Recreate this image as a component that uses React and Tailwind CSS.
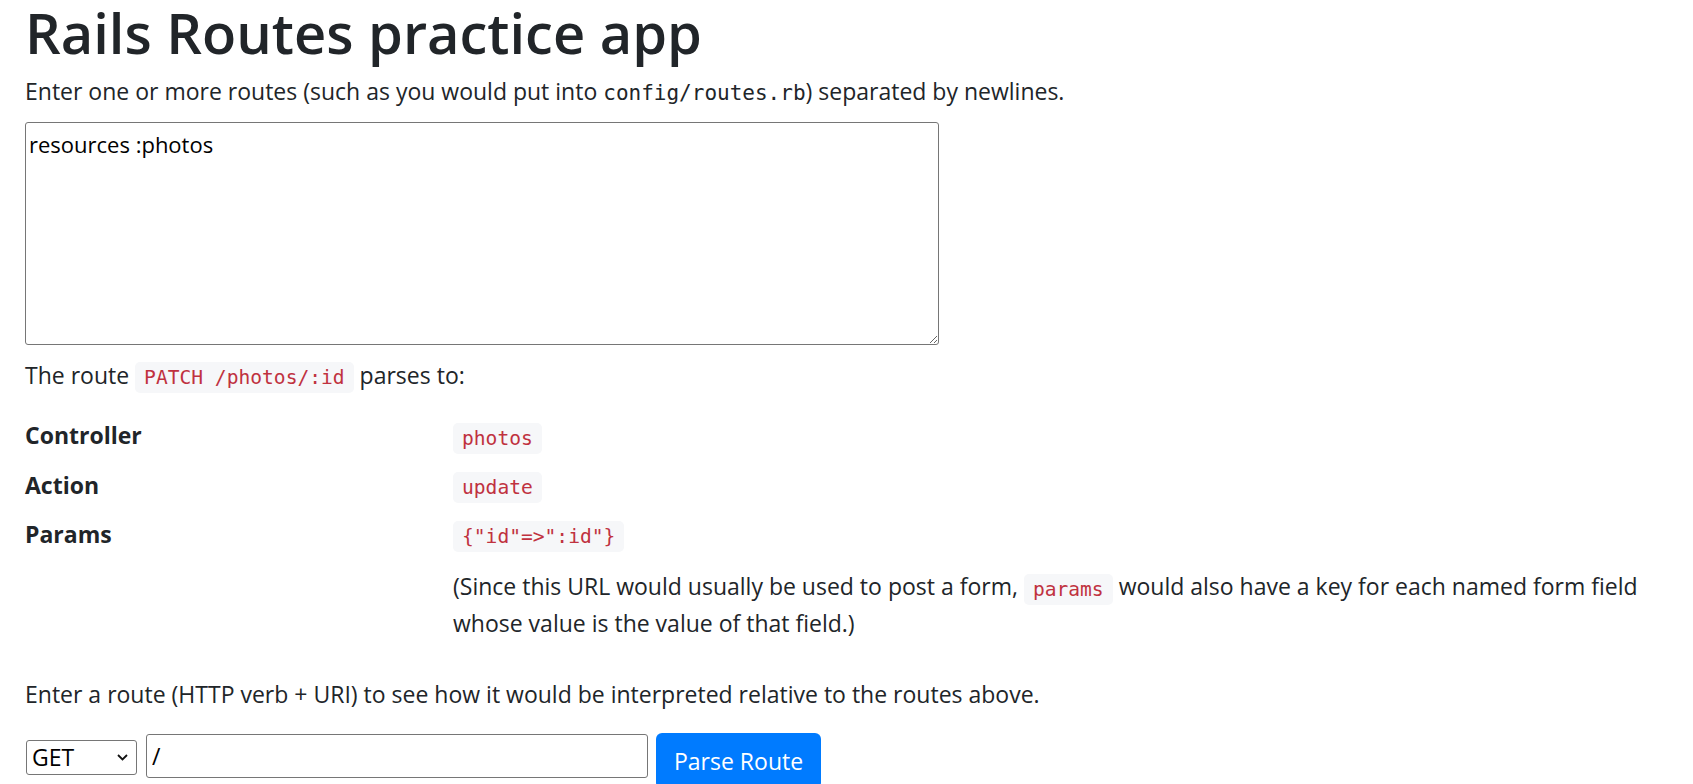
import React from "react";

const code =
  "font-['DejaVu_Sans_Mono',monospace] text-[19.6px] text-[#c0323f] bg-[#f6f7f9] rounded-[5px] inline-block px-[9px] leading-[31px] align-middle";

function Code({ children }) {
  return <code className={code}>{children}</code>;
}

const rows = [
  { label: "Controller", value: "photos" },
  { label: "Action", value: "update" },
  { label: "Params", value: '{"id"=>":id"}' },
];

export default function App() {
  return (
    <div className="min-h-screen bg-white px-[25px] font-['Open_Sans',sans-serif] text-[23px] leading-[36px] text-[#212529]">
      <h1 className="mb-[9px] text-[56px] font-semibold leading-[64px]">
        Rails Routes practice app
      </h1>
      <p className="mb-[11px]">
        Enter one or more routes (such as you would put into{" "}
        <span className="font-['DejaVu_Sans_Mono',monospace] text-[21px]">config/routes.rb</span>) separated by newlines.
      </p>
      <textarea
        className="block w-[914px] h-[223px] border border-[#767676] rounded-[3px] px-[3px] pt-[3px] text-[22px] leading-[36px] text-black outline-none"
        defaultValue="resources :photos"
      />
      <p className="mt-[12px] mb-[24px]">
        The route <Code>PATCH /photos/:id</Code> parses to:
      </p>

      <div className="grid grid-cols-[428px_1fr] gap-y-[13px]">
        {rows.map((row) => (
          <React.Fragment key={row.label}>
            <div className="font-bold">{row.label}</div>
            <div>
              <Code>{row.value}</Code>
            </div>
          </React.Fragment>
        ))}
        <div />
        <p className="mt-[3px] whitespace-nowrap">
          (Since this URL would usually be used to post a form, <Code>params</Code> would also have a key for each named form field
          <br />
          whose value is the value of that field.)
        </p>
      </div>

      <p className="mt-[35px] mb-[21px]">
        Enter a route (HTTP verb + URI) to see how it would be interpreted relative to the routes above.
      </p>

      <div className="flex items-start">
        <div className="relative mt-[6px] ml-[1px]">
          <select className="appearance-none w-[111px] h-[35px] border border-[#767676] rounded-[3px] pl-[5px] text-[23px] leading-[33px] text-black bg-white outline-none">
            <option>GET</option>
            <option>POST</option>
            <option>PATCH</option>
            <option>PUT</option>
            <option>DELETE</option>
          </select>
          <svg
            className="pointer-events-none absolute right-[9px] top-[15px]"
            width="11"
            height="7"
            viewBox="0 0 11 7"
            fill="none"
            stroke="#111"
            strokeWidth="1.8"
          >
            <path d="M1 1l4.5 4.5L10 1" />
          </svg>
        </div>
        <input
          type="text"
          defaultValue="/"
          className="mt-[1px] ml-[9px] w-[502px] h-[44px] border border-[#767676] rounded-[3px] px-[5px] text-[23px] text-black outline-none"
        />
        <button className="ml-[8px] h-[56px] px-[18px] rounded-[6px] bg-[#007bff] text-white text-[23px] leading-[36px]">
          Parse Route
        </button>
      </div>
    </div>
  );
}
